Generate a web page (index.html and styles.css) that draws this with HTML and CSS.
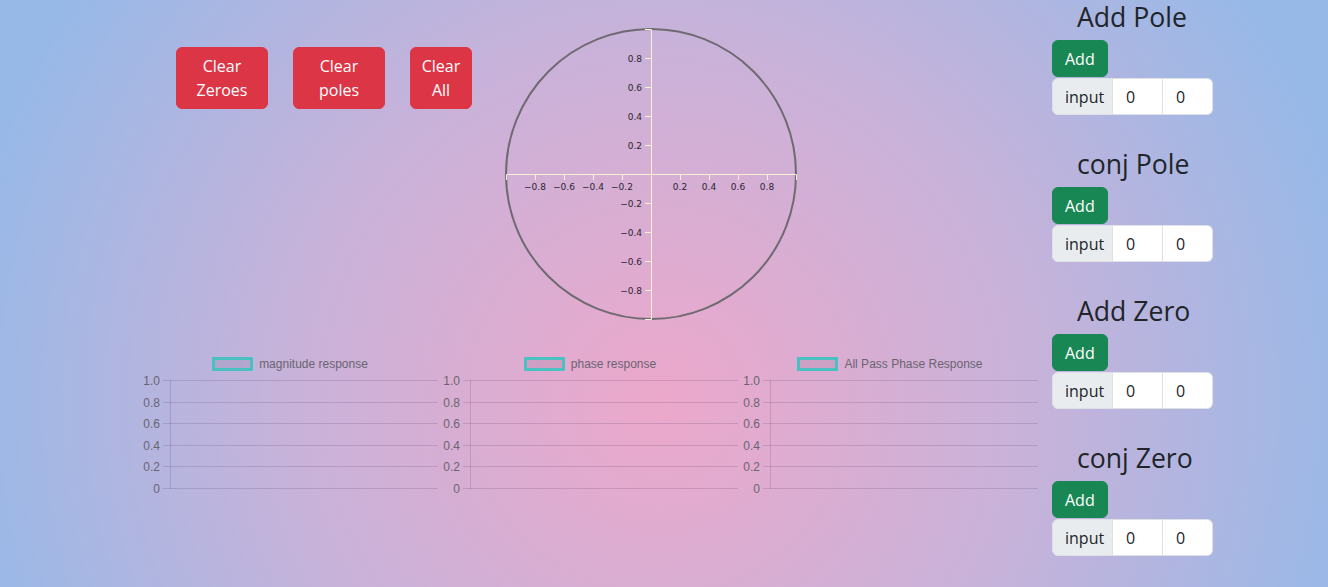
FILE: index.html
```html
<!DOCTYPE html>
<html>
<head>
    <meta charset="utf-8">
    <title>Pole Zero Filter Designer</title>
    <link rel="stylesheet" href="styles.css">
</head>
<body>
    <div class="page">
        <div class="workspace">
            <div class="top-row">
                <div class="clear-buttons">
                    <button class="btn btn-danger btn-wide">Clear Zeroes</button>
                    <button class="btn btn-danger btn-wide">Clear poles</button>
                    <button class="btn btn-danger btn-narrow">Clear All</button>
                </div>

                <!-- unit circle (z-plane) -->
                <svg class="unit-circle" width="300" height="300" viewBox="0 0 300 300">
                    <circle cx="150" cy="150" r="145" fill="none" stroke="#6f6a72" stroke-width="2"/>
                    <g class="axis" stroke="#fbefd6" stroke-width="1" fill="none">
                        <path d="M5.5,156V150.5H295.5V156"/>
                        <path d="M144,5.5H150.5V295.5H144"/>
                        <path d="M34.5,150V156M63.5,150V156M92.5,150V156M121.5,150V156M179.5,150V156M208.5,150V156M237.5,150V156M266.5,150V156"/>
                        <path d="M144,34.5H150M144,63.5H150M144,92.5H150M144,121.5H150M144,179.5H150M144,208.5H150M144,237.5H150M144,266.5H150"/>
                    </g>
                    <g class="tick-x" text-anchor="middle">
                        <text x="34" y="166">−0.8</text>
                        <text x="63" y="166">−0.6</text>
                        <text x="92" y="166">−0.4</text>
                        <text x="121" y="166">−0.2</text>
                        <text x="179" y="166">0.2</text>
                        <text x="208" y="166">0.4</text>
                        <text x="237" y="166">0.6</text>
                        <text x="266" y="166">0.8</text>
                    </g>
                    <g class="tick-y" text-anchor="end">
                        <text x="141" y="38">0.8</text>
                        <text x="141" y="67">0.6</text>
                        <text x="141" y="96">0.4</text>
                        <text x="141" y="125">0.2</text>
                        <text x="141" y="183">−0.2</text>
                        <text x="141" y="212">−0.4</text>
                        <text x="141" y="241">−0.6</text>
                        <text x="141" y="270">−0.8</text>
                    </g>
                </svg>
            </div>

            <div class="charts">
                <div class="chart">
                    <div class="legend"><span class="legend-box"></span>magnitude response</div>
                    <svg class="plot" width="300" height="130" viewBox="0 0 300 130">
                        <use href="#grid"/>
                    </svg>
                </div>
                <div class="chart">
                    <div class="legend"><span class="legend-box"></span>phase response</div>
                    <svg class="plot" width="300" height="130" viewBox="0 0 300 130">
                        <use href="#grid"/>
                    </svg>
                </div>
                <div class="chart">
                    <div class="legend"><span class="legend-box"></span>All Pass Phase Response</div>
                    <svg class="plot" width="300" height="130" viewBox="0 0 300 130">
                        <use href="#grid"/>
                    </svg>
                </div>
            </div>
        </div>

        <div class="controls">
            <div class="control-group">
                <h3>Add Pole</h3>
                <button class="btn btn-success">Add</button>
                <div class="input-group">
                    <span class="input-group-text">input</span>
                    <input type="text" class="form-control" value="0">
                    <input type="text" class="form-control" value="0">
                </div>
            </div>
            <div class="control-group">
                <h3>conj Pole</h3>
                <button class="btn btn-success">Add</button>
                <div class="input-group">
                    <span class="input-group-text">input</span>
                    <input type="text" class="form-control" value="0">
                    <input type="text" class="form-control" value="0">
                </div>
            </div>
            <div class="control-group">
                <h3>Add Zero</h3>
                <button class="btn btn-success">Add</button>
                <div class="input-group">
                    <span class="input-group-text">input</span>
                    <input type="text" class="form-control" value="0">
                    <input type="text" class="form-control" value="0">
                </div>
            </div>
            <div class="control-group">
                <h3>conj Zero</h3>
                <button class="btn btn-success">Add</button>
                <div class="input-group">
                    <span class="input-group-text">input</span>
                    <input type="text" class="form-control" value="0">
                    <input type="text" class="form-control" value="0">
                </div>
            </div>
        </div>
    </div>

    <!-- shared empty chart grid -->
    <svg width="0" height="0" class="defs">
        <defs>
            <g id="grid">
                <g stroke="rgba(60,40,80,0.16)" stroke-width="1">
                    <path d="M23,9.5H298M23,31.5H298M23,52.5H298M23,74.5H298M23,95.5H298M23,117.5H298"/>
                    <path d="M30.5,9V118"/>
                </g>
                <g class="tick-label" text-anchor="end">
                    <text x="20" y="13.5">1.0</text>
                    <text x="20" y="35.5">0.8</text>
                    <text x="20" y="56.5">0.6</text>
                    <text x="20" y="78.5">0.4</text>
                    <text x="20" y="99.5">0.2</text>
                    <text x="20" y="121.5">0</text>
                </g>
            </g>
        </defs>
    </svg>
</body>
</html>
```

FILE: styles.css
```css
:root {
    --danger: #dc3545;
    --success: #198754;
    --text: #212529;
    --border: #dee2e6;
    --addon: #e9ecef;
    --teal: #4bc0c0;
}

html, body {
    height: 100%;
}

body {
    margin: 0;
    font-family: "Open Sans", "Noto Sans", sans-serif;
    font-size: 16px;
    color: var(--text);
    background: radial-gradient(circle 720px at 660px 400px, #eca8cb 0%, #c9b2d9 50%, #96b9e8 100%);
    background-color: #96b9e8;
    overflow: hidden;
}

.page {
    display: flex;
    align-items: flex-start;
}

.workspace {
    width: 1040px;
}

.top-row {
    display: flex;
    align-items: flex-start;
}

.clear-buttons {
    display: flex;
    gap: 25px;
    padding: 47px 0 0 176px;
}

.btn {
    font-family: inherit;
    font-size: 16px;
    line-height: 24px;
    padding: 6px 12px;
    border: 1px solid transparent;
    border-radius: 6px;
    color: white;
    cursor: pointer;
    box-sizing: border-box;
}

.btn-danger {
    background: var(--danger);
    border-color: var(--danger);
    padding: 6px 4px;
}

.btn-wide {
    width: 92px;
}

.btn-narrow {
    width: 62px;
}

.btn-success {
    background: var(--success);
    border-color: var(--success);
    display: block;
    height: 37px;
    padding: 5px 12px;
}

.unit-circle {
    margin: 24px 0 0 29px;
    display: block;
}

.unit-circle text {
    font-family: "DejaVu Sans", sans-serif;
    font-size: 9px;
    fill: #2a2530;
}

.charts {
    display: flex;
    padding-left: 140px;
    margin-top: 26px;
}

.chart {
    width: 300px;
}

.legend {
    display: flex;
    justify-content: center;
    align-items: center;
    gap: 6px;
    margin-top: 7px;
    height: 14px;
    font-family: "Liberation Sans", Arial, sans-serif;
    font-size: 12px;
    color: #6a6470;
}

.legend-box {
    width: 41px;
    height: 14px;
    box-sizing: border-box;
    border: 3px solid var(--teal);
    background: rgba(90, 70, 110, 0.12);
}

.plot {
    display: block;
}

.tick-label {
    font-family: "Liberation Sans", Arial, sans-serif;
    font-size: 12px;
    fill: #6a6470;
}

.defs {
    position: absolute;
}

.controls {
    width: 161px;
    margin-left: 12px;
}

.control-group {
    margin-bottom: 32px;
}

.control-group h3 {
    margin: 0 0 6px;
    padding-left: 25px;
    font-size: 26.6px;
    font-weight: 400;
    line-height: 34px;
    white-space: nowrap;
}

.input-group {
    display: flex;
    margin-top: 1px;
    height: 37px;
}

.input-group-text {
    display: flex;
    align-items: center;
    width: 61px;
    box-sizing: border-box;
    padding: 0 12px;
    background: var(--addon);
    border: 1px solid var(--border);
    border-radius: 6px 0 0 6px;
}

.form-control {
    width: 50px;
    box-sizing: border-box;
    padding: 0 13px;
    font-family: inherit;
    font-size: 16px;
    color: var(--text);
    background: white;
    border: 1px solid var(--border);
    border-left: none;
    outline: none;
}

.form-control:last-child {
    border-radius: 0 6px 6px 0;
}
```
